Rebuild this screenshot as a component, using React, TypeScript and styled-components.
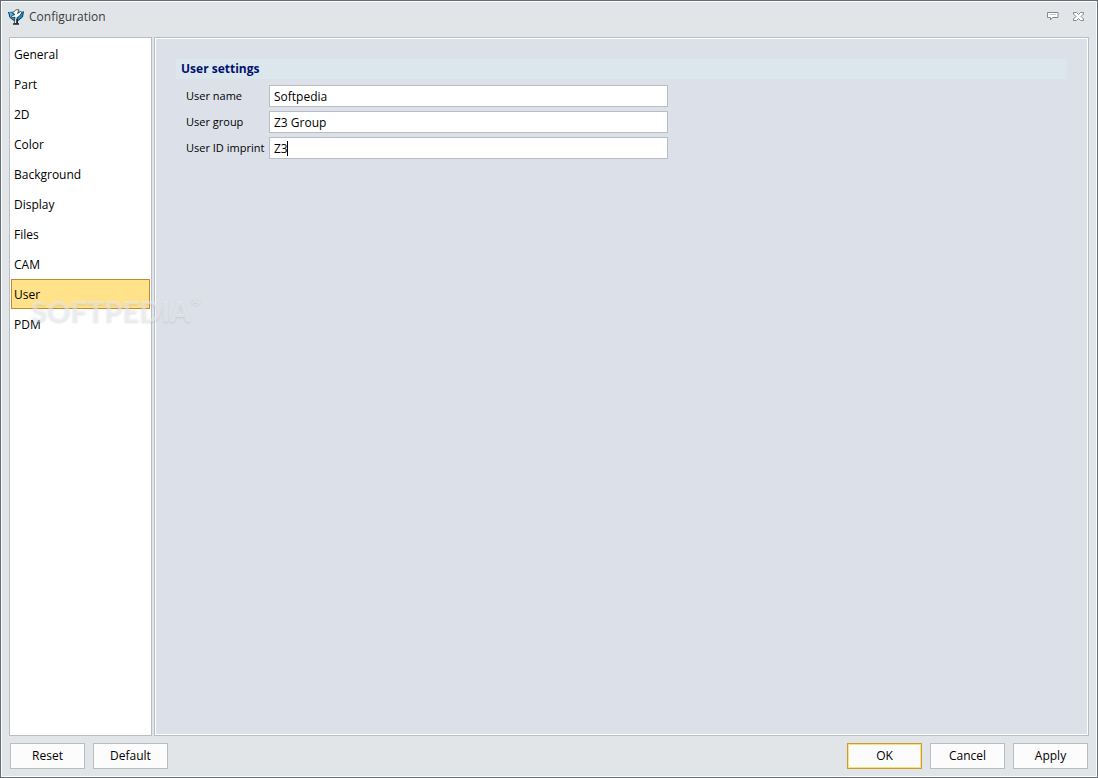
import React, { useState } from 'react';
import styled, { createGlobalStyle, css } from 'styled-components';

const GlobalStyle = createGlobalStyle`
  * { box-sizing: border-box; }
  body {
    margin: 0;
    font-family: "Open Sans", "Noto Sans", sans-serif;
    font-size: 12px;
    line-height: 16px;
    color: #000;
  }
  button, input { font: inherit; color: inherit; }
`;

const Window = styled.div`
  position: relative;
  display: flex;
  flex-direction: column;
  min-height: 100vh;
  padding: 0 7px 7px;
  background: #e2e5e8;
  border: 1px solid #666c77;
  box-shadow: inset 0 0 0 1px #fcfdfd;
`;

const TitleBar = styled.header`
  display: flex;
  align-items: center;
  height: 36px;
  margin-right: -2px;
  padding-bottom: 4px;
`;

const Title = styled.h1`
  flex: 1;
  margin: 0 0 0 5px;
  font-size: 12px;
  font-weight: 400;
  color: #3b3b3b;
`;

const CaptionButton = styled.button`
  display: flex;
  align-items: center;
  justify-content: center;
  width: 26px;
  height: 20px;
  padding: 0 0 2px;
  border: 0;
  background: none;
`;

const Body = styled.div`
  display: flex;
  flex: 1;
  gap: 2px;
  padding: 0 1px;
`;

const Sidebar = styled.nav`
  flex: none;
  width: 143px;
  padding: 1px;
  background: #fff;
  border: 1px solid #b9bdc4;
`;

const NavItem = styled.button<{ $active: boolean }>`
  display: block;
  width: 100%;
  height: 30px;
  padding: 1px 2px 0;
  text-align: left;
  background: transparent;
  border: 1px solid transparent;
  ${(p) => p.$active && css`
    background: #ffe28a;
    border-color: #c8862f;
  `}
`;

const Panel = styled.main`
  flex: 1;
  padding: 21px;
  background: #dce0e8;
  border: 1px solid #b9bdc4;
  box-shadow: inset 0 0 0 1px #fff;
`;

const SectionTitle = styled.h2`
  margin: 0 0 6px;
  padding: 2px 5px;
  font-size: 12px;
  font-weight: 700;
  color: #00116e;
  background: #dce7ed;
`;

const Form = styled.form`
  display: grid;
  grid-template-columns: 83px minmax(0, 399px);
  row-gap: 4px;
  padding-left: 10px;
`;

const Label = styled.label`
  align-self: center;
  font-size: 11px;
  white-space: nowrap;
`;

const Field = styled.div`
  position: relative;
  display: flex;
`;

const TextBox = styled.input`
  width: 100%;
  height: 22px;
  padding: 0 4px;
  background: #fff;
  border: 1px solid #b9bdc4;
  border-radius: 0;
  outline: none;
`;

const Caret = styled.span`
  position: absolute;
  top: 4px;
  left: 18px;
  width: 1px;
  height: 15px;
  background: #000;
`;

const Footer = styled.footer`
  display: flex;
  gap: 8px;
  padding: 7px 2px 1px;
`;

const Spacer = styled.div`
  flex: 1;
`;

const PushButton = styled.button<{ $primary?: boolean }>`
  width: 75px;
  height: 26px;
  padding: 0;
  background: #fcfcfd;
  border: 1px solid #b9bdc4;
  ${(p) => p.$primary && css`
    border-color: #c99b34;
    box-shadow: inset 0 0 0 1px #ffe07a;
  `}
`;

const Watermark = styled.div`
  position: absolute;
  top: 290px;
  left: 30px;
  display: flex;
  font-family: Lato, sans-serif;
  font-size: 29px;
  font-weight: 900;
  line-height: 40px;
  color: rgba(244, 245, 247, 0.5);
  text-shadow: 0 1px 2px rgba(90, 95, 105, 0.18);
  pointer-events: none;
`;

const Registered = styled.span`
  font-size: 12px;
  line-height: 20px;
`;

const AppIcon = () => (
  <svg width="16" height="16" viewBox="0 0 16 16" aria-hidden="true">
    <path d="M.5 3 6 2.500h9.500L14.500 8 9.500 12h-3L2 8.500Z" fill="#168bc5" />
    <path d="M.5 3 5 5 4 8.500 6.500 12 2 8.500Z" fill="#4fb6e3" />
    <path d="M.5 3 2 8.500 6.500 12M15.500 2.500l-1 5.500-5 4" fill="none" stroke="#123c58" />
    <path d="M4.500 4 8 .8h3L9.500 4.500l3-2 1.300 1.300L11 7.500l-2 1-.5 6H6.500l.5-6.500-3 .8L3.500 7 7 5.500Z" fill="#fff" stroke="#17222d" strokeWidth=".7" />
    <path d="M5 15h6M9.200 10v5" stroke="#1b242c" strokeWidth="1.500" />
  </svg>
);

const BalloonIcon = () => (
  <svg width="12" height="9" viewBox="0 0 12 9" aria-hidden="true">
    <path d="M.5.5h10.500v5H5.500l-2 2.500V5.500h-3Z" fill="#fff" stroke="#85898f" />
    <path d="M2.500 2.500h6.500" stroke="#c3c6ca" />
  </svg>
);

const CloseIcon = () => (
  <svg width="12" height="9" viewBox="0 0 12 9" aria-hidden="true">
    <path
      d="M.5.5h3l2 2 2-2h3v1.500L8 4.500 10.500 7v1.500h-3l-2-2-2 2h-3V7L3 4.500.5 2Z"
      fill="#fff"
      stroke="#85898f"
    />
  </svg>
);

const categories = ['General', 'Part', '2D', 'Color', 'Background', 'Display', 'Files', 'CAM', 'User', 'PDM'];

const fields = [
  { id: 'user-name', label: 'User name', value: 'Softpedia' },
  { id: 'user-group', label: 'User group', value: 'Z3 Group' },
  { id: 'user-imprint', label: 'User ID imprint', value: 'Z3', caret: true },
];

export default function App() {
  const [active, setActive] = useState('User');
  return (
    <>
      <GlobalStyle />
      <Window>
        <TitleBar>
          <AppIcon />
          <Title>Configuration</Title>
          <CaptionButton type="button" aria-label="Help"><BalloonIcon /></CaptionButton>
          <CaptionButton type="button" aria-label="Close"><CloseIcon /></CaptionButton>
        </TitleBar>
        <Body>
          <Sidebar>
            {categories.map((name) => (
              <NavItem key={name} type="button" $active={name === active} onClick={() => setActive(name)}>
                {name}
              </NavItem>
            ))}
          </Sidebar>
          <Panel>
            <SectionTitle>User settings</SectionTitle>
            <Form>
              {fields.map((f) => (
                <React.Fragment key={f.id}>
                  <Label htmlFor={f.id}>{f.label}</Label>
                  <Field>
                    <TextBox id={f.id} type="text" defaultValue={f.value} />
                    {f.caret && <Caret />}
                  </Field>
                </React.Fragment>
              ))}
            </Form>
          </Panel>
        </Body>
        <Footer>
          <PushButton type="button">Reset</PushButton>
          <PushButton type="button">Default</PushButton>
          <Spacer />
          <PushButton type="button" $primary>OK</PushButton>
          <PushButton type="button">Cancel</PushButton>
          <PushButton type="button">Apply</PushButton>
        </Footer>
        <Watermark aria-hidden="true">
          SOFTPEDIA<Registered>®</Registered>
        </Watermark>
      </Window>
    </>
  );
}
